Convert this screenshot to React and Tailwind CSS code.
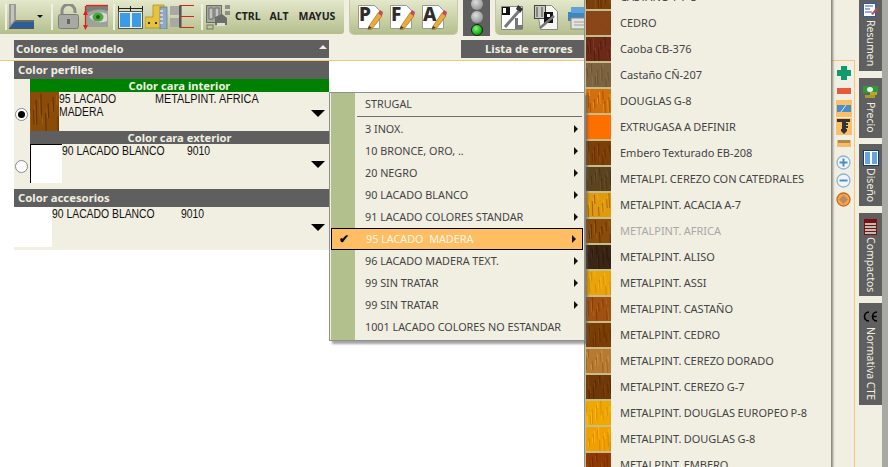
import React from "react";

const ui = "font-['Noto_Sans',sans-serif]";
const rowFont = "font-['Liberation_Sans',sans-serif]";

function Sep() {
  return <div className="w-[2px] h-[26px] bg-[#eef0e2] shrink-0" />;
}

function LIcon() {
  return (
    <svg width="25" height="25" viewBox="0 0 25 25" className="shrink-0">
      <path d="M0 0h7v16l-7 8z" fill="#9a9a94" />
      <path d="M2 1h3v15l-3 4z" fill="#c4c4bc" />
      <path d="M7 16h18v8H0z" fill="#2d5c97" />
      <path d="M7 16h18v2H6z" fill="#6b6b66" />
      <path d="M0 24h25v1H0z" fill="#555" />
    </svg>
  );
}
function LockIcon() {
  return (
    <svg width="22" height="25" viewBox="0 0 22 25" className="shrink-0">
      <path d="M4 11V7a6.5 6.5 0 0 1 13 0v2" fill="none" stroke="#8d8d88" strokeWidth="3" />
      <rect x="0.5" y="10.5" width="20" height="14" rx="2" fill="#a9a9a3" stroke="#7d7d78" />
      <rect x="9" y="15" width="3" height="5" fill="#65655f" />
    </svg>
  );
}
function EyeIcon() {
  return (
    <svg width="25" height="26" viewBox="0 0 25 26" className="shrink-0">
      <rect x="3" y="2" width="22" height="21" fill="#9fa29a" />
      <path d="M3 2h22v5Q14 3 3 9z" fill="#7c7f78" />
      <path d="M6 13Q14 6 24 10V17Q14 21 6 13z" fill="#d9dbd2" />
      <ellipse cx="15" cy="13" rx="5.5" ry="4.5" fill="#4aa83e" />
      <circle cx="15" cy="13" r="2" fill="#1f5a1a" />
      <path d="M3 1.5h22" stroke="#e2211c" strokeWidth="1.3" fill="none" />
      <path d="M2.5 2v22" stroke="#e2211c" strokeWidth="1.3" fill="none" />
      <path d="M2.5 6L0 11h5zM2.5 26L0 21h5z" fill="#e2211c" />
    </svg>
  );
}
function WinIcon() {
  return (
    <svg width="25" height="25" viewBox="0 0 25 25" className="shrink-0">
      <path d="M0.5 2v5M24.5 2v5M12.5 2v5M0 4.5h25" stroke="#222" fill="none" />
      <rect x="0.5" y="7.5" width="24" height="17" fill="#ececdf" stroke="#555" />
      <rect x="2" y="9" width="10" height="14" fill="#3b9be6" />
      <rect x="14" y="9" width="9" height="14" fill="#3b9be6" />
    </svg>
  );
}
function RulerIcon() {
  return (
    <svg width="23" height="25" viewBox="0 0 23 25" className="shrink-0">
      <path d="M0 13h8V1h11v23H0z" fill="#e9c23c" stroke="#a8861c" strokeWidth="0.7" />
      <rect x="3" y="18" width="2" height="2" fill="#333" />
      <rect x="10" y="18" width="2" height="2" fill="#333" />
      <rect x="15" y="3" width="7" height="22" fill="#8fa9c9" stroke="#5f7488" strokeWidth="0.7" />
      <path d="M15 7h3M15 11h3M15 15h3M15 19h3" stroke="#fff" />
    </svg>
  );
}
function ProfileIcon() {
  return (
    <svg width="25" height="25" viewBox="0 0 25 25" className="shrink-0">
      <path d="M0 2h9v9H0zM0 14h9v9H0z" fill="#a9a9a3" />
      <path d="M9 2h3v21H9z" fill="#8a8a84" />
      <path d="M10 1v23" stroke="#222" />
      <path d="M10 1.5h14M10 12.5h14M10 23.5h14" stroke="#d7231c" strokeWidth="1.2" />
    </svg>
  );
}
function PrinterIcon() {
  return (
    <svg width="25" height="26" viewBox="0 0 25 26" className="shrink-0">
      <rect x="0.5" y="1.5" width="15" height="17" fill="#a5a69f" stroke="#6e6e68" />
      <path d="M3 4h4v11H3zM9 4h4v11H9z" fill="#c5c6bf" stroke="#6e6e68" />
      <rect x="19" y="1" width="5" height="4" fill="#8f908a" />
      <rect x="19" y="7" width="5" height="4" fill="#8f908a" />
      <path d="M9 13l7-3 5 4v7H9z" fill="#6d6e69" />
      <path d="M11 19h8v3h-8z" fill="#dedfd8" />
      <rect x="1" y="21" width="6" height="4" fill="none" stroke="#777" />
    </svg>
  );
}
function DocIcon({ letter }) {
  return (
    <div className="relative w-[26px] h-[26px] shrink-0">
      <svg width="26" height="26" viewBox="0 0 26 26" className="absolute left-0 top-0">
        <path d="M0.5 1.5h16l5 5v18h-21z" fill="#fff" stroke="#9a9a94" />
      </svg>
      <span className={`absolute left-[1px] top-[-2px] text-[19px] leading-[24px] font-extrabold text-[#2d2d2d] ${ui}`}>{letter}</span>
      <svg width="26" height="26" viewBox="0 0 26 26" className="absolute left-0 top-0">
        <path d="M11 22l9-13 4 3-10 13-4 1z" fill="#ecaa3c" stroke="#8a6a20" strokeWidth="0.6" />
        <path d="M20 9l2-3 3 2-1 4z" fill="#c84a5a" />
        <path d="M10 25l1-3 3 2z" fill="#333" />
      </svg>
    </div>
  );
}
function ArchIcon() {
  return (
    <svg width="25" height="26" viewBox="0 0 25 26" className="shrink-0">
      <path d="M0.5 2.5h21v23h-21z" fill="#fff" stroke="#888" />
      <rect x="1" y="3" width="8" height="8" fill="#111" />
      <path d="M2 4h3v5H2z" fill="#fff" />
      <path d="M17 1l5 4-3 4-4-4z" fill="#333" />
      <path d="M18 7L4 23" stroke="#777" strokeWidth="3" />
      <path d="M14 14v11h8v-4h-5v-7z" fill="#777" />
    </svg>
  );
}
function DocPIcon() {
  return (
    <svg width="25" height="26" viewBox="0 0 25 26" className="shrink-0">
      <path d="M2.5 1.5h15l6 6v18h-17z" fill="#f6f6f0" stroke="#888" />
      <rect x="0.5" y="1.5" width="11" height="13" fill="#c8c8c0" stroke="#444" />
      <path d="M3 3v10M8 3v10" stroke="#444" />
      <rect x="10" y="8" width="9" height="11" fill="#111" />
      <rect x="13" y="10" width="3" height="3" fill="#fff" />
      <path d="M6 24L20 12" stroke="#777" strokeWidth="2.5" />
    </svg>
  );
}
function PrintBlue() {
  return (
    <svg width="25" height="26" viewBox="0 0 25 26" className="shrink-0">
      <path d="M1 8h24v9H1z" fill="#3d86c2" />
      <path d="M4 3h20v6H4z" fill="#5ea4da" />
      <path d="M4 14h18v11H4z" fill="#e3e4de" stroke="#8a8a84" />
      <path d="M7 18h12M7 21h12" stroke="#a0a09a" />
    </svg>
  );
}
function Light({ on }) {
  return on ? (
    <div className="w-[12px] h-[12px] rounded-full bg-[radial-gradient(circle_at_40%_35%,#8cf08c,#0eb80e_60%,#067a06)] border border-[#1d1d1d]" />
  ) : (
    <div className="w-[12px] h-[12px] rounded-full bg-[radial-gradient(circle_at_40%_35%,#dddddd,#9a9a9a_70%)]" />
  );
}

function Bar({ children, className = "" }) {
  return (
    <div className={`h-[18px] bg-[#5f5f5f] text-[#f1efe2] text-[11.3px] leading-[18px] font-bold ${ui} ${className}`}>{children}</div>
  );
}
function SubBar({ children, className = "" }) {
  return (
    <div className={`h-[13px] text-center text-[#f1efe2] text-[11.2px] leading-[13px] font-bold ${ui} ${className}`}>{children}</div>
  );
}

function Caret({ className = "" }) {
  return <div className={`w-0 h-0 border-l-[7px] border-r-[7px] border-t-[7px] border-l-transparent border-r-transparent border-t-black ${className}`} />;
}

function Radio({ on }) {
  return (
    <div className="absolute left-[1px] w-[13px] h-[13px] rounded-full bg-white border border-[#8a8a8a] flex items-center justify-center top-[16px]">
      {on && <div className="w-[7px] h-[7px] rounded-full bg-black" />}
    </div>
  );
}

function RowText({ children, className = "" }) {
  return (
    <div className={`origin-left scale-x-[0.865] whitespace-nowrap pt-[1px] ${className}`}>{children}</div>
  );
}

function Grain({ base, lines, wide }) {
  return (
    <svg width="100%" height="100%" viewBox="0 0 24 24" preserveAspectRatio="none" className="block">
      <rect width="24" height="24" fill={base} />
      {lines.map((l, i) => (
        <path key={i} d={`M${l[0]} ${l[1]}L${l[0] + 0.5} ${l[2]}`} stroke={l[3]} strokeWidth={wide || 1} opacity="0.8" />
      ))}
    </svg>
  );
}

function grainLines(dark, light, seed) {
  const out = [];
  for (let i = 0; i < 14; i++) {
    const x = (seed * 7 + i * 5) % 24;
    const y1 = (seed * 5 + i * 9) % 16;
    out.push([x, y1, y1 + 6 + (i * 3) % 12, i % 2 ? dark : light]);
  }
  return out;
}

const woods = [
  ["CASTAÑO T-7-3", "#7b3f0c", "#572a06", "#94540f"],
  ["CEDRO", "#8a4519", "#8a4519", "#8a4519"],
  ["Caoba CB-376", "#6b2a17", "#4a1a10", "#843b22"],
  ["Castaño CÑ-207", "#7d6340", "#65502f", "#8e7350"],
  ["DOUGLAS G-8", "#d2700c", "#a44a05", "#f0a020"],
  ["EXTRUGASA A DEFINIR", "#ff6f00", "#ff6f00", "#ff6f00"],
  ["Embero Texturado EB-208", "#7d3f08", "#5f2d05", "#935012"],
  ["METALPI. CEREZO CON CATEDRALES", "#5c4320", "#463014", "#6f5530"],
  ["METALPINT. ACACIA A-7", "#e09a0c", "#9c5a08", "#f0b020"],
  ["METALPINT. AFRICA", "#8a4c08", "#5c2f05", "#a56010", true],
  ["METALPINT. ALISO", "#3a2414", "#28180c", "#4a3020"],
  ["METALPINT. ASSI", "#eaa40a", "#d08a06", "#f5b820"],
  ["METALPINT. CASTAÑO", "#a0500f", "#7c3a08", "#b86a20"],
  ["METALPINT. CEDRO", "#7a3d06", "#5f2e04", "#8a4a0c"],
  ["METALPINT. CEREZO DORADO", "#b87a30", "#96601f", "#d09a50"],
  ["METALPINT. CEREZO G-7", "#6f3808", "#522805", "#85480f"],
  ["METALPINT. DOUGLAS EUROPEO P-8", "#f0a800", "#d88c00", "#ffc020"],
  ["METALPINT. DOUGLAS G-8", "#f0a000", "#d88400", "#ffbc20"],
  ["METALPINT. EMBERO", "#8f3a05", "#6f2a03", "#a54a0a"],
];

const series = [
  "3 INOX.",
  "10 BRONCE, ORO, ..",
  "20 NEGRO",
  "90 LACADO BLANCO",
  "91 LACADO COLORES STANDAR",
  "95 LACADO  MADERA",
  "96 LACADO MADERA TEXT.",
  "99 SIN TRATAR",
  "99 SIN TRATAR",
  "1001 LACADO COLORES NO ESTANDAR",
];

function SeriesMenu() {
  return (
    <div className={`absolute left-[329px] top-[92px] w-[256px] h-[249px] bg-[#f1efe2] border border-[#8f8f8f] shadow-[3px_3px_2px_rgba(90,90,90,0.55)] text-[#444] text-[10.8px] ${ui}`}>
      <div className="absolute left-[1px] top-0 bottom-0 w-[24px] bg-[#b1c08c]" />
      <div className="relative h-[23px] pl-[35px] leading-[21px]">STRUGAL</div>
      <div className="relative ml-[27px] mr-[2px] h-[1px] bg-[#6f6f6f]" />
      <div className="relative pt-[1px]">
        {series.map((s, i) => {
          const sel = i === 5;
          const last = i === series.length - 1;
          return (
            <div
              key={i}
              className={`relative h-[22px] flex items-center pl-[35px] pr-[6px] whitespace-pre ${sel ? "bg-[#ffbe64] border border-black mx-[1px] text-[#fff6e6] !pl-[34px]" : ""}`}
            >
              {sel && <span className="absolute left-[7px] top-[1px] text-[12px] leading-[18px] text-black font-bold">✔</span>}
              <span className="flex-1">{s}</span>
              {!last && <div className="w-0 h-0 border-y-[4px] border-l-[4px] border-y-transparent border-l-[#111]" />}
            </div>
          );
        })}
      </div>
    </div>
  );
}

function WoodMenu() {
  return (
    <div className={`absolute left-[584px] top-[-16px] w-[247px] bg-[#f1efe2] border-l border-[#8f8f8f] shadow-[2px_0_2px_rgba(90,90,90,0.7)] text-[#444] text-[11px] [word-spacing:-0.6px] ${ui}`}>
      {woods.map((w, i) => (
        <div key={i} className="h-[26px] flex items-center">
          <div className="w-[26px] h-[26px] bg-[#c5bd8a] py-[1px] pl-[1px] shrink-0">
            <Grain base={w[1]} lines={grainLines(w[2], w[3], i + 1)} />
          </div>
          <span className={`pl-[9px] pt-[1px] whitespace-nowrap ${w[4] ? "text-[#a8a8a8]" : ""}`}>{w[0]}</span>
        </div>
      ))}
    </div>
  );
}

function Tab({ h, label, icon, gap, className = "" }) {
  return (
    <div className={`w-[23px] bg-[#5f5f5f] flex flex-col items-center shrink-0 ${className}`} style={{ height: h }}>
      {icon}
      <span className={`[writing-mode:vertical-rl] text-[#f1efe2] text-[10.5px] leading-[23px] whitespace-nowrap ${ui}`} style={{ marginTop: gap }}>{label}</span>
    </div>
  );
}

function SideIcons() {
  return (
    <div className="w-[25px] shrink-0 flex flex-col items-center border-r border-[#f5c67f] bg-[#f1efe2] pt-[5px] pl-[3px]">
      <svg width="14" height="14" viewBox="0 0 14 14" className="shrink-0"><path d="M4 0h6v4h4v6h-4v4H4v-4H0V4h4z" fill="#0f9b6e" /></svg>
      <div className="w-[14px] h-[6px] bg-[#e8583c] mt-[8px] shrink-0" />
      <div className="w-[16px] h-[17px] bg-[#fbbf69] mt-[6px] flex items-center justify-center shrink-0">
        <svg width="14" height="7" viewBox="0 0 14 7"><rect width="14" height="7" fill="#4a8fc9" /><path d="M4 7l5-7" stroke="#dbe8f0" /></svg>
      </div>
      <div className="w-[16px] h-[17px] bg-[#fbbf69] mt-[1px] flex items-center justify-center shrink-0">
        <svg width="13" height="15" viewBox="0 0 13 15"><path d="M0 0h13v3H9v1h2v2H9v1h2v2H9v1h1v2l-3 3-3-3v-2h1V3H0z" fill="#333" /></svg>
      </div>
      <svg width="14" height="7" viewBox="0 0 14 7" className="mt-[5px] shrink-0"><rect width="14" height="7" fill="#f3bd68" /><path d="M2 0v3M4 0v3M6 0v3M8 0v3M10 0v3M12 0v3" stroke="#6a5a30" /></svg>
      <svg width="15" height="15" viewBox="0 0 15 15" className="mt-[8px] shrink-0"><circle cx="7.5" cy="7.5" r="6.5" fill="#f3f5f5" stroke="#8fb3d4" strokeWidth="1.3" /><path d="M3.5 7.5h8M7.5 3.5v8" stroke="#4a8fc9" strokeWidth="2" /></svg>
      <svg width="15" height="15" viewBox="0 0 15 15" className="mt-[3px] shrink-0"><circle cx="7.5" cy="7.5" r="6.5" fill="#f3f5f5" stroke="#8fb3d4" strokeWidth="1.3" /><path d="M3.5 7.5h8" stroke="#4a8fc9" strokeWidth="2" /></svg>
      <svg width="15" height="15" viewBox="0 0 15 15" className="mt-[4px] shrink-0"><circle cx="7.5" cy="7.5" r="6.5" fill="#f5a54a" stroke="#c66a1a" strokeWidth="1.3" /><path d="M7.5 3l4.5 4.5L7.5 12 3 7.5z" fill="#b98a68" /></svg>
    </div>
  );
}

export default function App() {
  return (
    <div className="relative w-[888px] h-[467px] overflow-hidden bg-[#f1efe2] flex">
      <div className="w-[855px] flex flex-col shrink-0">
        {/* top toolbars */}
        <div className="h-[36px] flex items-start shrink-0">
          <div className="w-[344px] h-[34px] pl-[5px] pt-[4px] rounded-br-[3px] bg-[linear-gradient(#e4e8cc,#b4be8c)] flex items-start">
            <Sep />
            <div className="ml-[2px]"><LIcon /></div>
            <div className="w-0 h-0 ml-[3px] mt-[11px] border-x-[3px] border-t-[3px] border-x-transparent border-t-[#111]" />
            <div className="ml-[8px]"><Sep /></div>
            <div className="ml-[5px]"><LockIcon /></div>
            <div className="ml-[3px]"><EyeIcon /></div>
            <div className="ml-[5px]"><Sep /></div>
            <div className="ml-[3px]"><WinIcon /></div>
            <div className="ml-[2px]"><RulerIcon /></div>
            <div className="ml-[2px]"><ProfileIcon /></div>
            <div className="ml-[6px]"><Sep /></div>
            <div className="ml-[3px]"><PrinterIcon /></div>
            <div className={`ml-[4px] flex gap-[9px] pt-[5px] text-[10.5px] leading-[14px] font-bold text-[#222] ${ui}`}>
              <span>CTRL</span><span>ALT</span><span className="ml-[1px]">MAYUS</span>
            </div>
          </div>
          <div className="ml-[5px] w-[109px] h-[35px] rounded-b-[5px] border border-t-0 border-[#c4cba4] bg-[linear-gradient(#e4e8cc,#b4be8c)] flex items-start pl-[8px] pt-[4px] gap-[6px]">
            <DocIcon letter="P" />
            <DocIcon letter="F" />
            <DocIcon letter="A" />
          </div>
          <div className="ml-[5px] w-[27px] h-[36px] bg-[#5f5f5f] flex flex-col items-center overflow-hidden">
            <div className="-mt-[2px]"><Light /></div>
            <div className="mt-[1px]"><Light /></div>
            <div className="mt-[1px]"><Light on /></div>
          </div>
          <div className="ml-[5px] w-[100px] h-[35px] rounded-bl-[5px] border-l border-[#c4cba4] bg-[linear-gradient(#e4e8cc,#b4be8c)] flex items-start pl-[5px] pt-[4px] gap-[8px]">
            <ArchIcon />
            <DocPIcon />
            <PrintBlue />
          </div>
        </div>
        {/* section headers */}
        <div className="h-[25px] shrink-0 pt-[4px] pl-[14px] flex border-b border-[#f5c67f]">
          <Bar className="w-[315px] pl-[2px] relative">
            Colores del modelo
            <div className="absolute right-[2px] top-[5px] w-0 h-0 border-x-[4px] border-b-[4px] border-x-transparent border-b-[#f1efe2]" />
          </Bar>
          <Bar className="ml-[132px] w-[123px] pl-[24px]">Lista de errores</Bar>
        </div>
        {/* content */}
        <div className="flex-1 flex min-h-0">
          <div className="flex-1 bg-white">
            <div className="ml-[14px] w-[315px] bg-[#f1efe2]">
              <Bar className="pl-[4px]">Color perfiles</Bar>
              <div className="flex">
                <div className="w-[16px] bg-[#f1efe2] shrink-0" />
                <div className="flex-1">
                  <SubBar className="bg-[#008000]">Color cara interior</SubBar>
                  <div className={`relative h-[39px] flex ${rowFont} text-[12px] leading-[13px] text-[#111]`}>
                    <div className="absolute -left-[16px] top-0 w-[16px] h-[39px]"><Radio on /></div>
                    <div className="w-[29px] h-[39px] shrink-0"><Grain base="#8a4c08" lines={grainLines("#5c2f05", "#a56010", 10)} /></div>
                    <div className="w-[96px]"><RowText>95 LACADO<br />MADERA</RowText></div>
                    <RowText className="!scale-x-[0.9]">METALPINT. AFRICA</RowText>
                    <Caret className="absolute right-[4px] top-[18px]" />
                  </div>
                  <SubBar className="bg-[#5f5f5f]">Color cara exterior</SubBar>
                  <div className={`relative h-[39px] flex ${rowFont} text-[12px] leading-[13px] text-[#111]`}>
                    <div className="absolute -left-[16px] top-0 w-[16px] h-[39px]"><Radio /></div>
                    <div className="w-[32px] h-[39px] bg-white border-l border-t border-black shrink-0" />
                    <div className="w-[125px]"><RowText>90 LACADO BLANCO</RowText></div>
                    <RowText>9010</RowText>
                    <Caret className="absolute right-[4px] top-[17px]" />
                  </div>
                </div>
              </div>
              <div className="h-[6px]" />
              <Bar className="pl-[4px]">Color accesorios</Bar>
              <div className={`relative h-[43px] flex ${rowFont} text-[12px] leading-[13px] text-[#111]`}>
                <div className="w-[38px] h-[40px] bg-white shrink-0" />
                <div className="w-[129px]"><RowText>90 LACADO BLANCO</RowText></div>
                <RowText>9010</RowText>
                <Caret className="absolute right-[4px] top-[17px]" />
              </div>
            </div>
          </div>
          <SideIcons />
        </div>
      </div>

      {/* right rail */}
      <div className="flex-1 flex">
        <div className="w-[27px] pl-[4px] flex flex-col bg-[#f1efe2]">
          <Tab h={71} gap={3} label="Resumen" icon={
            <svg width="15" height="14" viewBox="0 0 15 14" className="mt-[3px] shrink-0"><rect x="0.5" y="0.5" width="12" height="13" fill="#fff" stroke="#2a5cb0" /><path d="M2 3h8M2 6h5M2 9h7" stroke="#2a5cb0" /><path d="M8 11l5-6 2 1-5 6z" fill="#c44a5a" /></svg>
          } />
          <Tab h={60} gap={3} className="mt-[7px]" label="Precio" icon={
            <svg width="15" height="13" viewBox="0 0 15 13" className="mt-[8px] shrink-0"><rect width="15" height="7" fill="#2d9a3a" /><ellipse cx="7" cy="3.5" rx="3" ry="2.5" fill="#e9f7e6" /><rect x="7" y="6" width="7" height="3" fill="#b8a82c" /><rect x="2" y="9" width="10" height="3" fill="#a89a2c" /></svg>
          } />
          <Tab h={62} gap={2} className="mt-[6px]" label="Diseño" icon={
            <svg width="16" height="16" viewBox="0 0 16 16" className="mt-[6px] shrink-0"><rect x="0.5" y="0.5" width="15" height="15" fill="#fff" stroke="#153a7a" /><rect x="2" y="2" width="5" height="12" fill="#66a5dc" /><rect x="9" y="2" width="5" height="12" fill="#66a5dc" /></svg>
          } />
          <Tab h={83} gap={2} className="mt-[7px]" label="Compactos" icon={
            <svg width="13" height="16" viewBox="0 0 13 16" className="mt-[6px] shrink-0"><rect width="13" height="16" fill="#7a1010" /><path d="M1 5h11M1 8h11M1 11h11M1 14h11" stroke="#bdbdb0" strokeWidth="2" /></svg>
          } />
          <Tab h={102} gap={5} className="mt-[7px]" label="Normativa CTE" icon={
            <svg width="15" height="11" viewBox="0 0 15 11" className="mt-[8px] shrink-0"><path d="M6 1A4.5 4.5 0 0 0 6 10M14 1A4.5 4.5 0 0 0 14 10M9.5 5.5h4" fill="none" stroke="#000" strokeWidth="1.6" /></svg>
          } />
        </div>
        <div className="flex-1 bg-[#a9a9a4]" />
      </div>

      <WoodMenu />
      <SeriesMenu />
    </div>
  );
}
